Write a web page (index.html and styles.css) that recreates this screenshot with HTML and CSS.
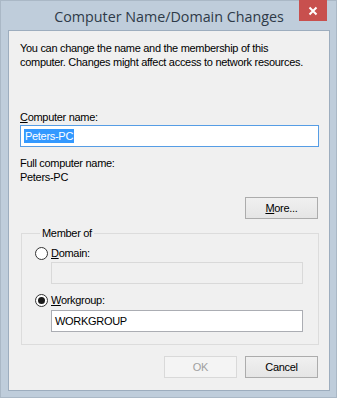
FILE: index.html
```html
<!DOCTYPE html>
<html>
<head>
<meta charset="utf-8">
<link rel="stylesheet" href="styles.css">
</head>
<body>
<div class="window">
  <div class="titlebar">
    <span class="title">Computer Name/Domain Changes</span>
    <span class="close"><svg width="10" height="10" viewBox="0 0 10 10"><path d="M1.5 1.5 L8.5 8.5 M8.5 1.5 L1.5 8.5" stroke="#fff" stroke-width="2" fill="none"/></svg></span>
  </div>
  <div class="client">
    <p class="intro">You can change the name and the membership of this computer. Changes might affect access to network resources.</p>
    <div class="label first"><u>C</u>omputer name:</div>
    <div class="input focused"><span class="sel">Peters-PC</span></div>
    <div class="label full">Full computer name:</div>
    <div class="label">Peters-PC</div>
    <div class="btnrow more-row"><span class="btn"><u>M</u>ore...</span></div>
    <fieldset class="group">
      <legend>Member of</legend>
      <div class="radio-row"><span class="radio"></span><span><u>D</u>omain:</span></div>
      <div class="input sub disabled"></div>
      <div class="radio-row wg"><span class="radio checked"></span><span><u>W</u>orkgroup:</span></div>
      <div class="input sub wgi"><span>WORKGROUP</span></div>
    </fieldset>
    <div class="btnrow footer"><span class="btn disabled-btn">OK</span><span class="btn">Cancel</span></div>
  </div>
</div>
</body>
</html>
```

FILE: styles.css
```css
html, body {
  margin: 0;
  padding: 0;
}
body {
  width: 337px;
  height: 398px;
  overflow: hidden;
  font-family: "Liberation Sans", Arial, sans-serif;
  font-size: 11px;
  letter-spacing: -0.3px;
  color: #000;
}
.window {
  position: relative;
  width: 337px;
  height: 398px;
  box-sizing: border-box;
  background: #bfcddb;
  padding: 0 6px 6px 7px;
  border: 1px solid #aab8c6;
}
.titlebar {
  height: 29px;
  display: flex;
  align-items: center;
  justify-content: center;
}
.title {
  font-family: "Open Sans", "Noto Sans", sans-serif;
  font-size: 14.3px;
  letter-spacing: 0;
  color: #2e3a48;
  margin-top: 2px;
}
.close {
  position: absolute;
  top: -1px;
  left: 298px;
  width: 28px;
  height: 21px;
  background: #c8504e;
  display: flex;
  align-items: center;
  justify-content: center;
}
.client {
  height: 361px;
  box-sizing: border-box;
  background: #f0f0f0;
  border: 1px solid #9dadbe;
  padding: 10px 10px 0 11px;
  line-height: 14px;
}
.intro {
  margin: 0;
  width: 290px;
}
.label.first {
  margin-top: 41px;
}
.input {
  height: 22px;
  box-sizing: border-box;
  border: 1px solid #abadb3;
  background: #fff;
  margin-top: 1px;
  padding: 3px 2px 0 3px;
  display: flex;
  align-items: flex-start;
}
.input.focused {
  border-color: #569de5;
}
.sel {
  background: #3399ff;
  color: #fff;
  line-height: 14px;
  padding: 0 1px;
}
.label.full {
  margin-top: 9px;
}
.btnrow {
  display: flex;
  justify-content: flex-end;
  gap: 8px;
  padding-right: 1px;
}
.more-row {
  margin-top: 13px;
}
.btn {
  width: 73px;
  height: 22px;
  box-sizing: border-box;
  border: 1px solid #acacac;
  background: linear-gradient(#f0f0f0, #e5e5e5);
  display: flex;
  align-items: center;
  justify-content: center;
}
.disabled-btn {
  border-color: #d9d9d9;
  background: #f4f4f4;
  color: #a0a0a0;
}
.group {
  margin: 7px 0 0 1px;
  padding: 6px 15px 12px 13px;
  border: 1px solid #dcdcdc;
  min-width: 0;
}
.group legend {
  margin-left: 5px;
  padding: 0 2px;
  line-height: 14px;
}
.radio-row {
  display: flex;
  align-items: center;
  gap: 3px;
  height: 14px;
}
.radio {
  width: 13px;
  height: 13px;
  box-sizing: border-box;
  border-radius: 50%;
  border: 1px solid #333;
  background: #fff;
  display: flex;
  align-items: center;
  justify-content: center;
}
.radio.checked::after {
  content: "";
  width: 7px;
  height: 7px;
  border-radius: 50%;
  background: #1a1a1a;
}
.input.sub {
  margin: 2px 0 0 16px;
}
.input.wgi {
  margin-top: 3px;
}
.input.disabled {
  background: #f0f0f0;
  border-color: #d9d9d9;
}
.radio-row.wg {
  margin-top: 9px;
}
.footer {
  margin-top: 11px;
}
```
